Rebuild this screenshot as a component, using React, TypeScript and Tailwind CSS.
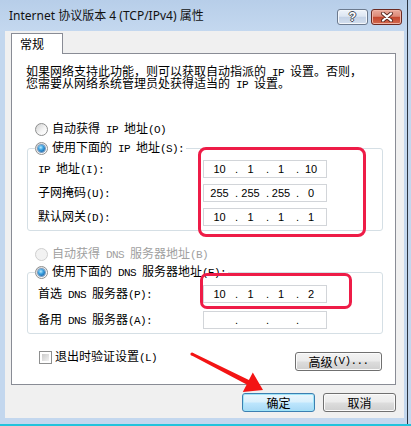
import React from "react";

function T({ s }: { s: string }) {
  const parts = s.split(/([\x20-\x7e]+)/).filter((p) => p.length > 0);
  return (
    <>
      {parts.map((p, i) =>
        /^[\x20-\x7e]+$/.test(p) ? (
          <span key={i} className="whitespace-pre [font-family:'Liberation_Mono',monospace] text-[11px] tracking-[-0.6px]">
            {p}
          </span>
        ) : (
          <span key={i}>{p}</span>
        )
      )}
    </>
  );
}

function Radio({ checked, disabled }: { checked?: boolean; disabled?: boolean }) {
  return (
    <span
      className={`flex h-[13px] w-[13px] shrink-0 items-center justify-center rounded-full border ${
        disabled
          ? "border-[#cfcfcf] bg-[#f2f2f2]"
          : "border-[#8e8f8f] bg-[linear-gradient(135deg,#d2d2d2,#f6f6f6_60%,#ffffff)]"
      }`}
    >
      {checked && (
        <span className="h-[7px] w-[7px] rounded-full bg-[radial-gradient(circle_at_40%_35%,#b8ecff_0%,#3aa0e0_40%,#0c4a8c_100%)] shadow-[0_0_0_1px_#7a9cc0]" />
      )}
    </span>
  );
}

function IpBox({ v }: { v: string[] }) {
  return (
    <div className="flex h-[18px] w-[124px] shrink-0 border border-[#d2d5d9] bg-white [font-family:'Liberation_Sans',Arial,sans-serif] text-[11px] leading-[16px] text-black">
      {v.map((n, i) => (
        <div key={i} className={`flex ${i < 2 ? "w-[31px]" : "w-[30px]"}`}>
          <span className="w-[4px]">{i > 0 ? "." : ""}</span>
          <span className="flex-1 text-center">{n}</span>
          <span className="w-[4px]" />
        </div>
      ))}
    </div>
  );
}

function Row({ label, v }: { label: string; v: string[] }) {
  return (
    <div className="flex h-[18px] items-center">
      <div className="flex h-[18px] w-[175px] items-center pl-[10px] whitespace-nowrap">
        <span className="leading-[16px]">
          <T s={label} />
        </span>
      </div>
      <IpBox v={v} />
    </div>
  );
}

const btn =
  "flex h-[19px] items-center justify-center rounded-[3px] border border-[#707070] bg-[linear-gradient(#f3f3f3_0%,#ebebeb_48%,#dddddd_52%,#cfcfcf_100%)] shadow-[inset_0_0_0_1px_#fbfbfb] leading-[17px]";

export default function App() {
  return (
    <div className="relative flex h-[426px] w-[411px] flex-col overflow-hidden bg-[#c3d7ee] text-[12px] text-black [font-family:'Noto_Sans_CJK_SC',sans-serif]">
      {/* title bar */}
      <div className="relative flex h-[31px] shrink-0 bg-[linear-gradient(#b7cee9,#c4d8ef)]">
        <div className="mt-[8px] ml-[9px] leading-[16px] whitespace-nowrap text-[#111] [font-family:'Noto_Sans','Noto_Sans_CJK_SC',sans-serif] text-[12px]">
          Internet 协议版本 4 (TCP/IPv4) 属性
        </div>
        <div className="ml-auto mt-[9px] mr-[9px] flex gap-[3px]">
          <div className="flex h-[16px] w-[31px] items-center justify-center rounded-[3px] border border-[#6c7a8e] bg-[linear-gradient(#eef3fa_0%,#dde6f2_45%,#c4d2e6_52%,#d3dfee_100%)] shadow-[inset_0_0_0_1px_#f4f7fb]">
            <span className="text-[12px] leading-[14px] font-bold text-white [font-family:'Liberation_Sans',sans-serif] [text-shadow:1px_0_#434c58,-1px_0_#434c58,0_1px_#434c58,0_-1px_#434c58]">
              ?
            </span>
          </div>
          <div className="flex h-[16px] w-[31px] items-center justify-center rounded-[3px] border border-[#6b2a22] bg-[linear-gradient(#eaaa9c_0%,#dc8a78_45%,#c4472f_52%,#d2694f_100%)] shadow-[inset_0_0_0_1px_#efb4a6]">
            <svg width="14" height="10" viewBox="0 0 14 10">
              <path d="M3 1.5 L11 8.5 M11 1.5 L3 8.5" stroke="#5a2a22" strokeWidth="4" strokeLinecap="round" />
              <path d="M3 1.5 L11 8.5 M11 1.5 L3 8.5" stroke="#ffffff" strokeWidth="2.2" strokeLinecap="round" />
            </svg>
          </div>
        </div>
      </div>

      {/* content */}
      <div className="ml-[5px] mr-[7px] flex h-[387px] shrink-0 flex-col bg-[#f0f0f0] pt-[2px] pl-[6px] pr-[8px]">
        {/* tab */}
        <div className="relative z-10 -mb-px flex h-[21px] w-[52px] border border-b-0 border-[#898c95] bg-white pl-[8px] leading-[20px]">
          常规
        </div>
        {/* panel */}
        <div className="flex h-[332px] w-[385px] flex-col border border-[#898c95] bg-white">
          <div className="mt-[12px] ml-[14px] flex flex-col whitespace-nowrap">
            <div className="flex h-[12px] items-center">
              <span className="leading-[12px]">
                <T s="如果网络支持此功能，则可以获取自动指派的 IP 设置。否则，" />
              </span>
            </div>
            <div className="flex h-[12px] items-center">
              <span className="leading-[12px]">
                <T s="您需要从网络系统管理员处获得适当的 IP 设置。" />
              </span>
            </div>
          </div>

          <div className="mt-[31px] ml-[23px] flex h-[16px] items-center gap-[4px]">
            <Radio />
            <span className="leading-[16px]">
              <T s="自动获得 IP 地址(O)" />
            </span>
          </div>

          <fieldset className="mt-[3px] ml-[15px] w-[356px] rounded-[3px] border border-[#d5dfe5] p-0 pb-[4px]">
            <legend className="ml-[7px] flex h-[16px] items-center gap-[4px] p-0 pr-[2px]">
              <Radio checked />
              <span className="leading-[16px]">
                <T s="使用下面的 IP 地址(S):" />
              </span>
            </legend>
            <div className="mt-[4px] flex flex-col gap-[6px]">
              <Row label="IP 地址(I):" v={["10", "1", "1", "10"]} />
              <Row label="子网掩码(U):" v={["255", "255", "255", "0"]} />
              <Row label="默认网关(D):" v={["10", "1", "1", "1"]} />
            </div>
          </fieldset>

          <div className="mt-[15px] ml-[23px] flex h-[16px] items-center gap-[4px] text-[#a0a0a0]">
            <Radio disabled />
            <span className="leading-[16px]">
              <T s="自动获得 DNS 服务器地址(B)" />
            </span>
          </div>

          <fieldset className="mt-[2px] ml-[15px] w-[356px] rounded-[3px] border border-[#d5dfe5] p-0 pb-[4px]">
            <legend className="ml-[7px] flex h-[16px] items-center gap-[4px] p-0 pr-[2px]">
              <Radio checked />
              <span className="leading-[16px]">
                <T s="使用下面的 DNS 服务器地址(E):" />
              </span>
            </legend>
            <div className="mt-[5px] flex flex-col gap-[8px]">
              <Row label="首选 DNS 服务器(P):" v={["10", "1", "1", "2"]} />
              <Row label="备用 DNS 服务器(A):" v={["", "", "", ""]} />
            </div>
          </fieldset>

          <div className="mt-[15px] ml-[27px] flex w-[343px] items-start">
            <div className="flex h-[16px] items-center gap-[3px]">
              <span className="h-[13px] w-[13px] border border-[#8e8f8f] bg-white p-[2px]">
                <span className="block h-full w-full bg-[linear-gradient(135deg,#cbcbcb,#f2f2f2)]" />
              </span>
              <span className="leading-[16px]">
                <T s="退出时验证设置(L)" />
              </span>
            </div>
            <div className={`${btn} mt-[3px] ml-auto w-[87px]`}>
              <T s="高级(V)..." />
            </div>
          </div>
        </div>

        {/* dialog buttons */}
        <div className="mt-[8px] flex justify-end gap-[8px]">
          <div className="flex h-[19px] w-[73px] items-center justify-center rounded-[3px] border border-[#3c7fb1] bg-[linear-gradient(#eaf6fd_0%,#d9f0fc_48%,#bee6fd_52%,#a7d9f5_100%)] shadow-[inset_0_0_0_1px_#9fe4f8] leading-[17px]">
            确定
          </div>
          <div className={`${btn} w-[73px]`}>取消</div>
        </div>
      </div>

      <div className="mt-[6px] h-[2px] w-full bg-[#22c3dc]" />

      {/* right dark edge */}
      <div className="pointer-events-none absolute top-0 bottom-[2px] right-[3px] w-px bg-[#2b3440]" />

      {/* red annotation boxes */}
      <div className="pointer-events-none absolute left-[198px] top-[147px] h-[90px] w-[168px] rounded-[8px] border-[3px] border-[#ee1c47]" />
      <div className="pointer-events-none absolute left-[200px] top-[273px] h-[36px] w-[152px] rounded-[7px] border-[3px] border-[#ee1c47]" />

      {/* red arrow */}
      <svg className="pointer-events-none absolute left-0 top-0" width="411" height="426" viewBox="0 0 411 426">
        <polygon
          points="192.7,352.7 248.9,380.1 252.8,372.5 263,390 242.8,392.1 246.7,384.5 191.3,355.3"
          fill="#f31414"
        />
        <circle cx="192" cy="354" r="1.6" fill="#f31414" />
      </svg>
    </div>
  );
}
